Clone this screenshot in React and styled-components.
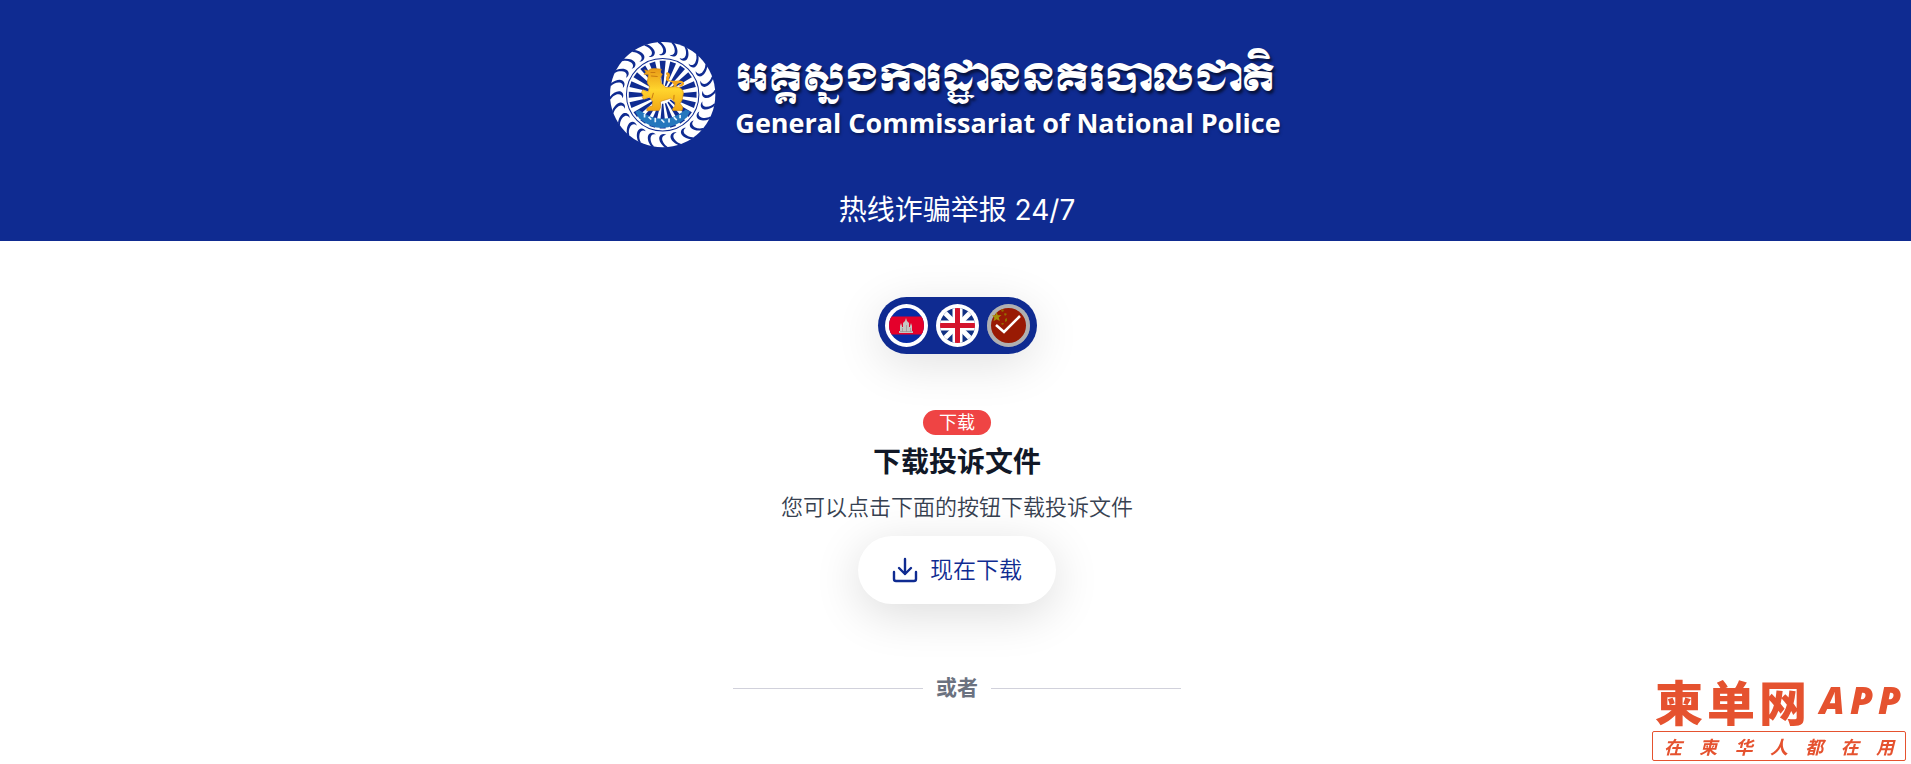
import React, { useState } from "react";
import styled, { createGlobalStyle } from "styled-components";

const GlobalStyle = createGlobalStyle`
  *, *::before, *::after { box-sizing: border-box; }
  body { margin: 0; background: #ffffff; }
  h1, h2, p { margin: 0; }
  button { font: inherit; border: 0; cursor: pointer; }
`;

const navy = "#0f2b91";
const orange = "#e5522f";

const Page = styled.div`
  position: relative;
  min-height: 100vh;
  font-family: "Inter", "Noto Sans CJK SC", sans-serif;
  color: #111827;
`;

const Header = styled.header`
  display: flex;
  flex-direction: column;
  align-items: center;
  gap: 41px;
  padding: 41px 24px 10px 27px;
  background: ${navy};
  color: #ffffff;
`;

const Brand = styled.div`
  display: flex;
  align-items: center;
  gap: 18px;
  padding-right: 24px;
`;

const Seal = styled.svg`
  flex: none;
  width: 108px;
  height: 108px;
`;

const BrandNames = styled.div`
  display: flex;
  flex-direction: column;
  padding-top: 4px;
  text-shadow: 2px 3px 3px rgba(0, 0, 0, 0.6);
`;

const KhmerName = styled.p`
  font-family: "Khmer OS Muol Light", "Moul", "Noto Sans Khmer", "DejaVu Sans", sans-serif;
  font-size: 38px;
  line-height: 52px;
  font-weight: 400;
  white-space: nowrap;
`;

const EnglishName = styled.p`
  font-family: "Open Sans", sans-serif;
  font-size: 27px;
  line-height: 36px;
  font-weight: 700;
  white-space: nowrap;
  text-shadow: 1px 2px 3px rgba(0, 0, 0, 0.4);
`;

const Hotline = styled.h1`
  font-size: 28px;
  line-height: 41px;
  font-weight: 400;
`;

const Main = styled.main`
  display: flex;
  flex-direction: column;
  align-items: center;
  padding: 56px 24px 56px 27px;
`;

const Languages = styled.div`
  display: flex;
  gap: 8px;
  padding: 7px;
  border-radius: 32px;
  background: ${navy};
  box-shadow: 0 10px 48px rgba(0, 0, 0, 0.12);
`;

const LanguageButton = styled.button`
  display: block;
  width: 43px;
  height: 43px;
  padding: 0;
  background: transparent;
  border-radius: 50%;

  svg { display: block; width: 100%; height: 100%; }
`;

const Download = styled.section`
  display: flex;
  flex-direction: column;
  align-items: center;
  margin-top: 56px;
`;

const Badge = styled.span`
  padding: 0 16px;
  border-radius: 16px;
  background: #ef4444;
  color: #ffffff;
  font-size: 18px;
  line-height: 25px;
`;

const Title = styled.h2`
  margin-top: 7px;
  font-family: "Noto Sans CJK SC", sans-serif;
  font-size: 28px;
  line-height: 36px;
  font-weight: 700;
`;

const Description = styled.p`
  margin-top: 10px;
  color: #374151;
  font-family: "Noto Sans CJK SC", sans-serif;
  font-size: 22px;
  line-height: 34px;
  font-weight: 350;
`;

const DownloadButton = styled.button`
  display: flex;
  align-items: center;
  gap: 12px;
  margin-top: 14px;
  padding: 17px 34px;
  border-radius: 34px;
  background: #ffffff;
  color: ${navy};
  box-shadow: 0 10px 48px rgba(0, 0, 0, 0.14);
  && {
    font-size: 23px;
    line-height: 34px;
    font-weight: 350;
  }

  svg { width: 26px; height: 26px; }
`;

const Divider = styled.div`
  display: flex;
  align-items: center;
  gap: 13px;
  width: 100%;
  max-width: 448px;
  margin-top: 69px;
  color: #6b7280;
  font-size: 21px;
  line-height: 30px;
  font-weight: 700;

  &::before, &::after {
    content: "";
    flex: 1;
    height: 1px;
    background: #d1d1db;
  }
`;

const Watermark = styled.aside`
  position: fixed;
  right: 5px;
  bottom: 3px;
  width: 254px;
  color: ${orange};
  font-family: "Noto Sans CJK SC", sans-serif;
  font-weight: 900;
`;

const WatermarkTop = styled.div`
  display: flex;
  align-items: center;
  justify-content: space-between;
  padding: 0 5px 6px 3px;
  line-height: 50px;
`;

const WatermarkName = styled.span`
  display: flex;
  gap: 4px;
  font-size: 48px;
`;

const WatermarkApp = styled.span`
  display: flex;
  gap: 5px;
  font-family: "Open Sans", sans-serif;
  font-size: 37px;
  font-weight: 800;
  font-style: italic;
`;

const WatermarkSlogan = styled.div`
  display: flex;
  justify-content: space-between;
  padding: 0 11px;
  border: 1px solid ${orange};
  border-radius: 2px;
  font-size: 18px;
  line-height: 28px;
  font-weight: 700;
  font-style: italic;
`;

const Letters = ({ text }) => [...text].map((char, i) => <span key={i}>{char}</span>);

const feathers = Array.from({ length: 24 }, (_, i) => i * 15);
const rays = Array.from({ length: 20 }, (_, i) => i * 18);

function PoliceSeal() {
  return (
    <Seal viewBox="28 33 322 322" aria-hidden="true">
      <defs>
        <linearGradient id="gold" x1="0" y1="0" x2="0" y2="1">
          <stop offset="0" stopColor="#e99a16" />
          <stop offset="0.5" stopColor="#ffd52d" />
          <stop offset="1" stopColor="#f2a715" />
        </linearGradient>
      </defs>
      <circle cx="188" cy="193" r="157" fill="#fff" />
      {feathers.map((a) => (
        <g key={a} transform={`rotate(${a} 188 193)`}>
          <path
            d="M174 34 L182 36 C192 44 200 56 198 66 C195 76 184 78 177 73 C188 73 191 65 189 57 C186 48 181 42 174 38Z"
            fill={navy}
          />
        </g>
      ))}
      <circle cx="188" cy="193" r="108" fill="#fff" stroke={navy} strokeWidth="3" />
      {rays.map((a) => (
        <path key={a} d="M179 92 H197 L190 166 H186Z" fill={navy} transform={`rotate(${a} 188 193)`} />
      ))}
      <path
        d="M118 239 Q188 292 257 237 L270 243 L260 261 Q188 322 118 264 L106 244Z"
        fill="#2477bd"
      />
      <path
        d="M134 251v10m12-2 8 8m12-5v13m18-8 9 9m14-12v12m14-16 9 9m10-15v9"
        fill="none"
        stroke="#e5f4ff"
        strokeWidth="5"
      />
      <path
        d="M221 178 C224 160 216 153 204 154 C196 151 197 142 201 136 C196 130 198 126 203 126 C212 128 211 139 206 145 L208 150 C223 155 236 147 248 154 C257 160 249 169 239 170 L237 165 L246 160 C234 155 229 163 227 175Z"
        fill="#f2a51c"
      />
      <path
        d="M134 119 L145 122 Q151 114 164 115 L184 117 L181 126 L187 132 L181 144 L184 159 L198 172 L225 169 Q248 171 250 188 L246 209 L240 219 L248 230 L246 240 L218 240 Q215 234 224 229 L225 216 L212 204 L188 211 L181 214 L182 230 L178 240 L141 241 Q138 234 148 229 L157 227 L158 213 L148 200 L132 207 Q124 202 130 195 L125 187 L129 178 L144 185 L149 169 Q138 158 144 145 L145 133 L132 132 L138 126Z"
        fill="url(#gold)"
        stroke="#d18a19"
        strokeWidth="2"
      />
      <path
        d="M153 127h12m-11 10 18 2m-12 50-4 14m66-8-1 12"
        fill="none"
        stroke="#c97b10"
        strokeWidth="3"
        strokeLinecap="round"
      />
    </Seal>
  );
}

function CambodiaFlag() {
  return (
    <svg viewBox="0 0 43 43" aria-hidden="true">
      <circle cx="21.5" cy="21.5" r="21.5" fill="#fff" />
      <clipPath id="kh"><circle cx="21.5" cy="21.5" r="17.5" /></clipPath>
      <g clipPath="url(#kh)">
        <path d="M0 0h43v43H0z" fill="#072ba5" />
        <path d="M0 12.5h43v18H0z" fill="#e4002b" />
        <path
          d="M14 29v-2h1v-5l1-3 1 3v1h1v-4l2-2 1-3 1 3 2 2v4h1v-1l1-3 1 3v5h1v2Z"
          fill="#c7c4c2"
        />
        <path d="M17.500 24v4m8-4v4m-4-7v7M15 27.500h13" stroke="#969391" strokeWidth=".7" />
      </g>
    </svg>
  );
}

function BritainFlag() {
  return (
    <svg viewBox="0 0 43 43" aria-hidden="true">
      <circle cx="21.5" cy="21.5" r="21.5" fill="#fff" />
      <clipPath id="gb"><circle cx="21.5" cy="21.5" r="17.5" /></clipPath>
      <g clipPath="url(#gb)">
        <path d="M0 0h43v43H0z" fill="#103082" />
        <path d="M4 4 39 39M39 4 4 39" stroke="#fff" strokeWidth="5" />
        <path d="M21.500 0v43M0 21.500h43" stroke="#fff" strokeWidth="10" />
        <path d="M21.500 4v35M4 21.500h35" stroke="#d4142c" strokeWidth="5" />
      </g>
    </svg>
  );
}

function ChinaFlag() {
  return (
    <svg viewBox="0 0 43 43" aria-hidden="true">
      <circle cx="21.5" cy="21.5" r="21.5" fill="#fff" />
      <circle cx="21.5" cy="21.5" r="17.5" fill="#de2706" />
      <path d="m9.500 8 1.300 3.300 3.700-.2-2.800 2.400 1.100 3.500-3.300-1.800-3 2 .9-3.500-2.400-2.400 3.400-.1Z" fill="#f4d20a" />
      <path d="m15 5 2 1-1 2-2-1Zm3 4 2 1-2 2-1-2Zm0 6 2-1v3l-2 1Zm-3 4 2 0-1 2-2-1Z" fill="#d89b00" />
    </svg>
  );
}

const SelectedMark = () => (
  <svg viewBox="0 0 43 43" aria-hidden="true">
    <circle cx="21.5" cy="21.5" r="21.5" fill="#000" fillOpacity=".31" />
    <path d="m9 21 8 7 16-16" fill="none" stroke="#fff" strokeWidth="2.600" />
  </svg>
);

const FlagStack = styled.span`
  display: grid;
  svg { grid-area: 1 / 1; }
`;

const DownloadIcon = () => (
  <svg viewBox="0 0 26 26" fill="none" stroke="currentColor" strokeWidth="2.400" strokeLinecap="round" strokeLinejoin="round" aria-hidden="true">
    <path d="M2 15v7q0 2 2 2h18q2 0 2-2v-7M13 2v15M7 11l6 6 6-6" />
  </svg>
);

const languages = [
  { code: "km", label: "ភាសាខ្មែរ", Flag: CambodiaFlag },
  { code: "en", label: "English", Flag: BritainFlag },
  { code: "zh", label: "中文", Flag: ChinaFlag },
];

export default function App() {
  const [language, setLanguage] = useState("zh");
  return (
    <Page lang="zh-CN">
      <GlobalStyle />
      <Header>
        <Brand>
          <PoliceSeal />
          <BrandNames>
            <KhmerName lang="km">អគ្គស្នងការដ្ឋាននគរបាលជាតិ</KhmerName>
            <EnglishName lang="en">General Commissariat of National Police</EnglishName>
          </BrandNames>
        </Brand>
        <Hotline>热线诈骗举报 24/7</Hotline>
      </Header>
      <Main>
        <Languages>
          {languages.map(({ code, label, Flag }) => (
            <LanguageButton
              key={code}
              type="button"
              aria-label={label}
              aria-pressed={code === language}
              onClick={() => setLanguage(code)}
            >
              <FlagStack>
                <Flag />
                {code === language && <SelectedMark />}
              </FlagStack>
            </LanguageButton>
          ))}
        </Languages>
        <Download>
          <Badge>下载</Badge>
          <Title>下载投诉文件</Title>
          <Description>您可以点击下面的按钮下载投诉文件</Description>
          <DownloadButton type="button">
            <DownloadIcon />
            现在下载
          </DownloadButton>
        </Download>
        <Divider>或者</Divider>
      </Main>
      <Watermark>
        <WatermarkTop>
          <WatermarkName><Letters text="柬单网" /></WatermarkName>
          <WatermarkApp><Letters text="APP" /></WatermarkApp>
        </WatermarkTop>
        <WatermarkSlogan><Letters text="在柬华人都在用" /></WatermarkSlogan>
      </Watermark>
    </Page>
  );
}
